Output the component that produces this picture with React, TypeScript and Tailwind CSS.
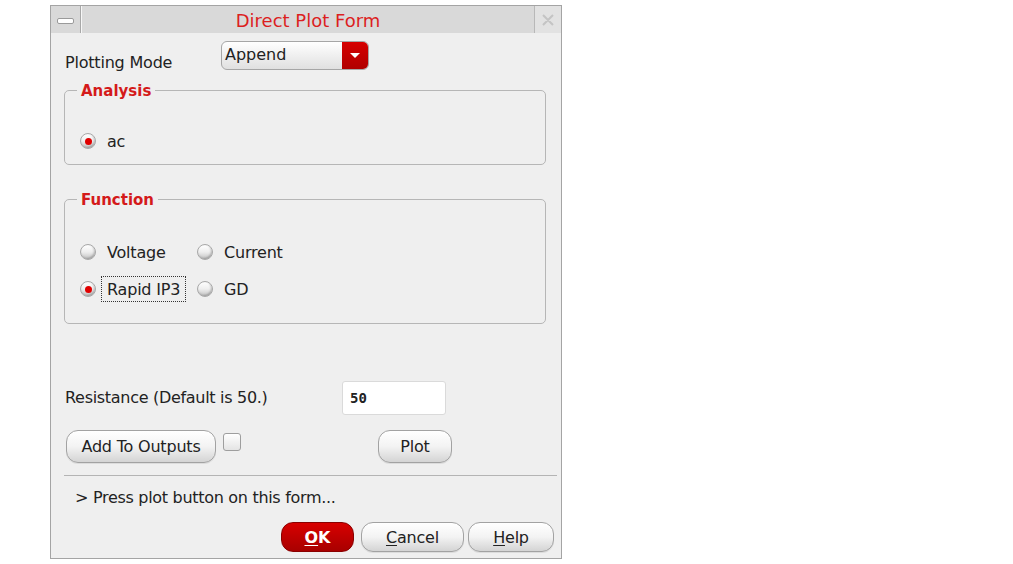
import type { ReactNode } from "react";
import clsx from "clsx";

const font = { fontFamily: '"DejaVu Sans", "Liberation Sans", sans-serif' };

function Radio({ checked }: { checked?: boolean }) {
  return (
    <span className="flex h-4 w-4 shrink-0 items-center justify-center rounded-full border border-[#a8a8a8] bg-linear-to-b from-white via-[#eeeeee] to-[#c4c4c4] shadow-[inset_-1px_-1px_2px_rgba(0,0,0,0.22)]">
      {checked && <span className="h-[7px] w-[7px] rounded-full bg-[#e00000]" />}
    </span>
  );
}

function RadioItem({ label, checked, focused, className }: { label: string; checked?: boolean; focused?: boolean; className?: string }) {
  return (
    <div className={clsx("flex h-[26px] items-center", className)}>
      <Radio checked={checked} />
      <span
        className={clsx(
          "ml-[5px] flex h-[26px] items-center border px-[5px] pt-[1px] text-[16px] tracking-[-0.2px] text-[#222]",
          focused ? "border-dotted border-[#333]" : "border-transparent"
        )}
      >
        {label}
      </span>
    </div>
  );
}

function Btn({ children, className }: { children: ReactNode; className?: string }) {
  return (
    <button className={clsx("flex items-center justify-center rounded-[12px] border border-[#a2a2a2] bg-linear-to-b from-white via-[#f3f3f3] to-[#d4d4d4] pt-[1px] text-[16px] tracking-[-0.2px] text-[#222] shadow-[0_1px_0_rgba(0,0,0,0.08)]", className)}>
      {children}
    </button>
  );
}

function Group({ title, className, children }: { title: string; className?: string; children: ReactNode }) {
  return (
    <fieldset className={clsx("ml-[13px] w-[482px] rounded-[5px] border border-[#b6b6b6]", className)}>
      <legend className="ml-[12px] px-[4px] pt-[1px] text-[15px] leading-[18px] font-bold text-[#d41a1a]">{title}</legend>
      {children}
    </fieldset>
  );
}

export default function App() {
  return (
    <div className="h-[564px] w-[1013px] bg-white pl-[50px] pt-[5px]" style={font}>
      <div className="flex h-[554px] w-[512px] flex-col border border-[#a4a4a4] bg-[#efefef]">
        {/* title bar */}
        <div className="flex h-[27px] shrink-0 bg-[#d9d9d9]">
          <div className="flex w-[30px] items-center justify-center border-r border-r-[#a8a8a8]">
            <span className="mt-[2px] h-[6px] w-[17px] rounded-[2px] border border-[#9a9a9a] bg-white" />
          </div>
          <div className="w-px bg-white/80" />
          <div className="flex flex-1 items-center justify-center pt-[2px] text-[18px] text-[#dc1f1f]">Direct Plot Form</div>
          <div className="flex w-[27px] items-center justify-center border-l border-l-[#b8b8b8] bg-[#e2e2e2]">
            <svg width="14" height="14" viewBox="0 0 14 14">
              <path d="M2 2 L5 5 M12 2 L9 5 M2 12 L5 9 M12 12 L9 9 M5 5 L9 9 M9 5 L5 9" stroke="#c4c4c4" strokeWidth="2" fill="none" />
            </svg>
          </div>
        </div>

        {/* plotting mode */}
        <div className="mt-[8px] flex h-[29px] shrink-0 items-start">
          <span className="mt-[12px] w-[170px] pl-[14px] text-[16px] leading-[20px] tracking-[-0.2px] text-[#222]">Plotting Mode</span>
          <div className="flex h-[29px] w-[148px] overflow-hidden rounded-[6px] border border-[#a6a6a6] bg-linear-to-b from-white to-[#e0e0e0]">
            <span className="flex flex-1 items-center pb-[1px] pl-[3px] text-[16px] text-[#222]">Append</span>
            <span className="flex w-[26px] items-center justify-center bg-linear-to-b from-[#d60000] to-[#b00000]">
              <svg width="10" height="6" viewBox="0 0 10 6">
                <path d="M0 0 H10 L5 5 Z" fill="white" />
              </svg>
            </span>
          </div>
        </div>

        <Group title="Analysis" className="mt-[11px] h-[84px]">
          <div className="pl-[15px] pt-[28px]">
            <RadioItem label="ac" checked />
          </div>
        </Group>

        <Group title="Function" className="mt-[25px] h-[134px]">
          <div className="flex flex-col gap-[11px] pl-[15px] pt-[30px]">
            <div className="flex">
              <RadioItem label="Voltage" className="w-[117px]" />
              <RadioItem label="Current" />
            </div>
            <div className="flex">
              <RadioItem label="Rapid IP3" checked focused className="w-[117px]" />
              <RadioItem label="GD" />
            </div>
          </div>
        </Group>

        {/* resistance */}
        <div className="mt-[57px] flex h-[34px] shrink-0 items-center">
          <span className="w-[291px] pl-[14px] text-[16px] tracking-[-0.3px] text-[#222]">Resistance (Default is 50.)</span>
          <div className="flex h-[34px] w-[104px] items-center rounded-[3px] border border-[#dadada] bg-white pl-[7px]">
            <span className="text-[14px] font-bold text-[#222]" style={{ fontFamily: '"DejaVu Sans Mono", monospace' }}>50</span>
          </div>
        </div>

        {/* buttons */}
        <div className="mt-[15px] flex h-[33px] shrink-0 items-start">
          <Btn className="ml-[15px] h-[33px] w-[150px]">Add To Outputs</Btn>
          <span className="ml-[7px] mt-[3px] h-[18px] w-[18px] rounded-[3px] border border-[#9e9e9e] bg-linear-to-b from-white to-[#e4e4e4]" />
          <Btn className="ml-[137px] h-[33px] w-[74px]">Plot</Btn>
        </div>

        <div className="ml-[13px] mr-[4px] mt-[12px] h-px shrink-0 bg-[#b4b4b4]" />

        <div className="mt-[12px] pl-[24px] text-[16px] leading-[20px] tracking-[-0.3px] text-[#222]">&gt; Press plot button on this form...</div>

        <div className="mt-[14px] flex h-[30px] shrink-0 justify-end pr-[7px]">
          <button className="flex h-[30px] w-[73px] items-center justify-center rounded-[12px] border border-[#8a0000] bg-linear-to-b from-[#d80000] to-[#a80000] pt-[1px] text-[16px] font-bold text-white">
            <span className="underline underline-offset-2">O</span>K
          </button>
          <Btn className="ml-[7px] h-[30px] w-[103px]">
            <span className="underline underline-offset-2">C</span>ancel
          </Btn>
          <Btn className="ml-[4px] h-[30px] w-[86px]">
            <span className="underline underline-offset-2">H</span>elp
          </Btn>
        </div>
      </div>
    </div>
  );
}
